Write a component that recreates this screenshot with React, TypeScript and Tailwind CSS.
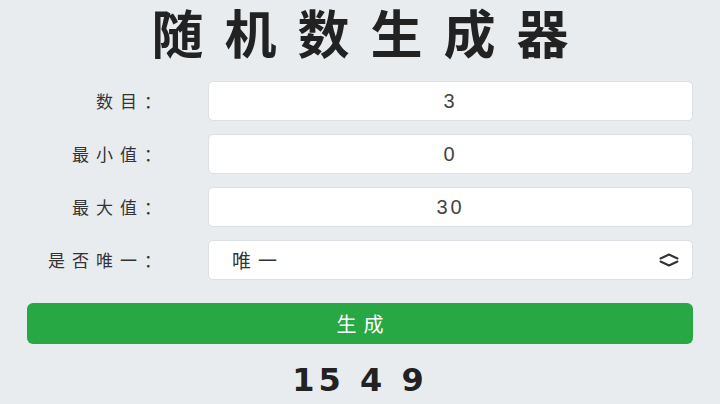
import { useState } from 'react';

const cjk = "font-['Noto_Sans_CJK_SC',sans-serif]";

function Chevrons() {
  return (
    <svg width="20" height="14" viewBox="0 0 20 14" fill="none" stroke="#333" strokeWidth="2" strokeLinecap="round" strokeLinejoin="round">
      <path d="M1.5 5.5 L10 1.5 L18.5 5.5" />
      <path d="M1.5 8.5 L10 12.5 L18.5 8.5" />
    </svg>
  );
}

export default function App() {
  const [count, setCount] = useState('3');
  const [min, setMin] = useState('0');
  const [max, setMax] = useState('30');
  const [unique, setUnique] = useState('唯一');
  const [result, setResult] = useState([15, 4, 9]);

  const generate = () => {
    const n = parseInt(count) || 0;
    const lo = parseInt(min) || 0;
    const hi = parseInt(max) || 0;
    const out: number[] = [];
    let guard = 0;
    while (out.length < n && guard < 10000) {
      guard++;
      const v = lo + Math.floor(Math.random() * (hi - lo + 1));
      if (unique === '唯一' && out.includes(v)) continue;
      out.push(v);
    }
    setResult(out);
  };

  const rows = [
    { label: '数目：', value: count, set: setCount },
    { label: '最小值：', value: min, set: setMin },
    { label: '最大值：', value: max, set: setMax },
  ];

  return (
    <div className={`min-h-screen bg-[#e9ecef] px-[27px] ${cjk}`}>
      <h1 className="pl-[21px] text-center text-[52px] leading-[64px] font-bold tracking-[21px] text-[#222]">
        随机数生成器
      </h1>

      <div className="mt-[17px] grid grid-cols-[181px_1fr] gap-y-[13px]">
        {rows.map((r) => (
          <div key={r.label} className="contents">
            <label className="flex h-[40px] items-center justify-end pr-[40px] text-[17px] tracking-[7px] text-[#333]">
              {r.label}
            </label>
            <input
              value={r.value}
              onChange={(e) => r.set(e.target.value)}
              className="h-[40px] w-full rounded-[5px] border border-[#dcdfe3] bg-white text-center text-[20px] tracking-[3px] text-[#444] outline-none font-['Liberation_Sans',sans-serif]"
            />
          </div>
        ))}
        <label className="flex h-[40px] items-center justify-end pr-[40px] text-[17px] tracking-[7px] text-[#333]">
          是否唯一：
        </label>
        <div className="relative h-[40px]">
          <select
            value={unique}
            onChange={(e) => setUnique(e.target.value)}
            className="h-full w-full appearance-none rounded-[5px] border border-[#dcdfe3] bg-white pl-[23px] text-[19px] tracking-[7px] text-[#333] outline-none"
          >
            <option value="唯一">唯一</option>
            <option value="可重复">可重复</option>
          </select>
          <div className="pointer-events-none absolute right-[14px] top-[13px]">
            <Chevrons />
          </div>
        </div>
      </div>

      <button
        onClick={generate}
        className="mt-[23px] flex h-[41px] w-full items-center justify-center rounded-[6px] bg-[#28a745] pl-[7px] text-[20px] tracking-[7px] text-white"
      >
        生成
      </button>

      <div className="mt-[16px] text-center text-[32px] leading-[40px] font-bold tracking-[4px] text-[#222] font-['DejaVu_Sans',sans-serif]">
        {result.join(' ')}
      </div>
    </div>
  );
}
